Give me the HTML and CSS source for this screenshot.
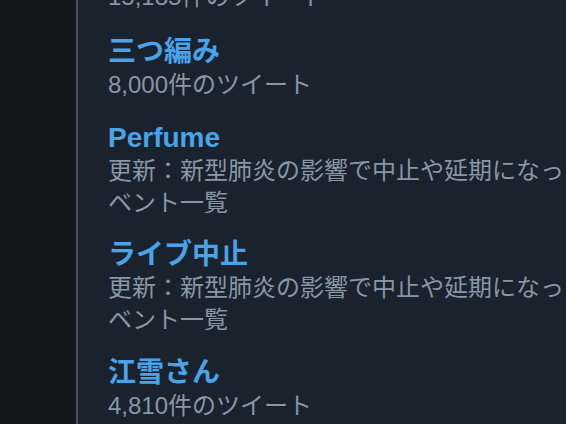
FILE: index.html
```html
<!DOCTYPE html>
<html lang="ja">
<head>
<meta charset="utf-8">
<link rel="stylesheet" href="styles.css">
</head>
<body>
<div class="layout">
  <div class="rail"></div>
  <main class="panel">
    <ul class="trends">
      <li class="trend trend-cut">
        <div class="meta">15,185件のツイート</div>
      </li>
      <li class="trend">
        <div class="name">三つ編み</div>
        <div class="meta">8,000件のツイート</div>
      </li>
      <li class="trend">
        <div class="name">Perfume</div>
        <div class="meta">更新：新型肺炎の影響で中止や延期になったイベント一覧</div>
      </li>
      <li class="trend">
        <div class="name">ライブ中止</div>
        <div class="meta">更新：新型肺炎の影響で中止や延期になったイベント一覧</div>
      </li>
      <li class="trend">
        <div class="name">江雪さん</div>
        <div class="meta">4,810件のツイート</div>
      </li>
    </ul>
  </main>
</div>
</body>
</html>
```
FILE: styles.css
```css
html, body {
  margin: 0;
  padding: 0;
  height: 100%;
  overflow: hidden;
  background: #1a222d;
}
body {
  font-family: "Liberation Sans", "Noto Sans CJK JP", sans-serif;
}
.layout {
  display: flex;
  height: 424px;
  width: 640px;
}
.rail {
  width: 76px;
  flex: none;
  background: #12171d;
  border-right: 2px solid #45505c;
}
.panel {
  flex: 1;
  background: #1a222d;
  overflow: hidden;
}
.trends {
  list-style: none;
  margin: -19px 0 0 0;
  padding: 0 0 0 30px;
  width: 515px;
}
.trend {
  padding: 10px 0 9.5px;
}
.trend-cut {
  padding-top: 0;
  padding-bottom: 12px;
}
.name {
  font-size: 28px;
  line-height: 34px;
  font-weight: bold;
  color: #4aa2e8;
}
.meta {
  font-size: 24px;
  line-height: 32px;
  color: #8797a4;
}
```
